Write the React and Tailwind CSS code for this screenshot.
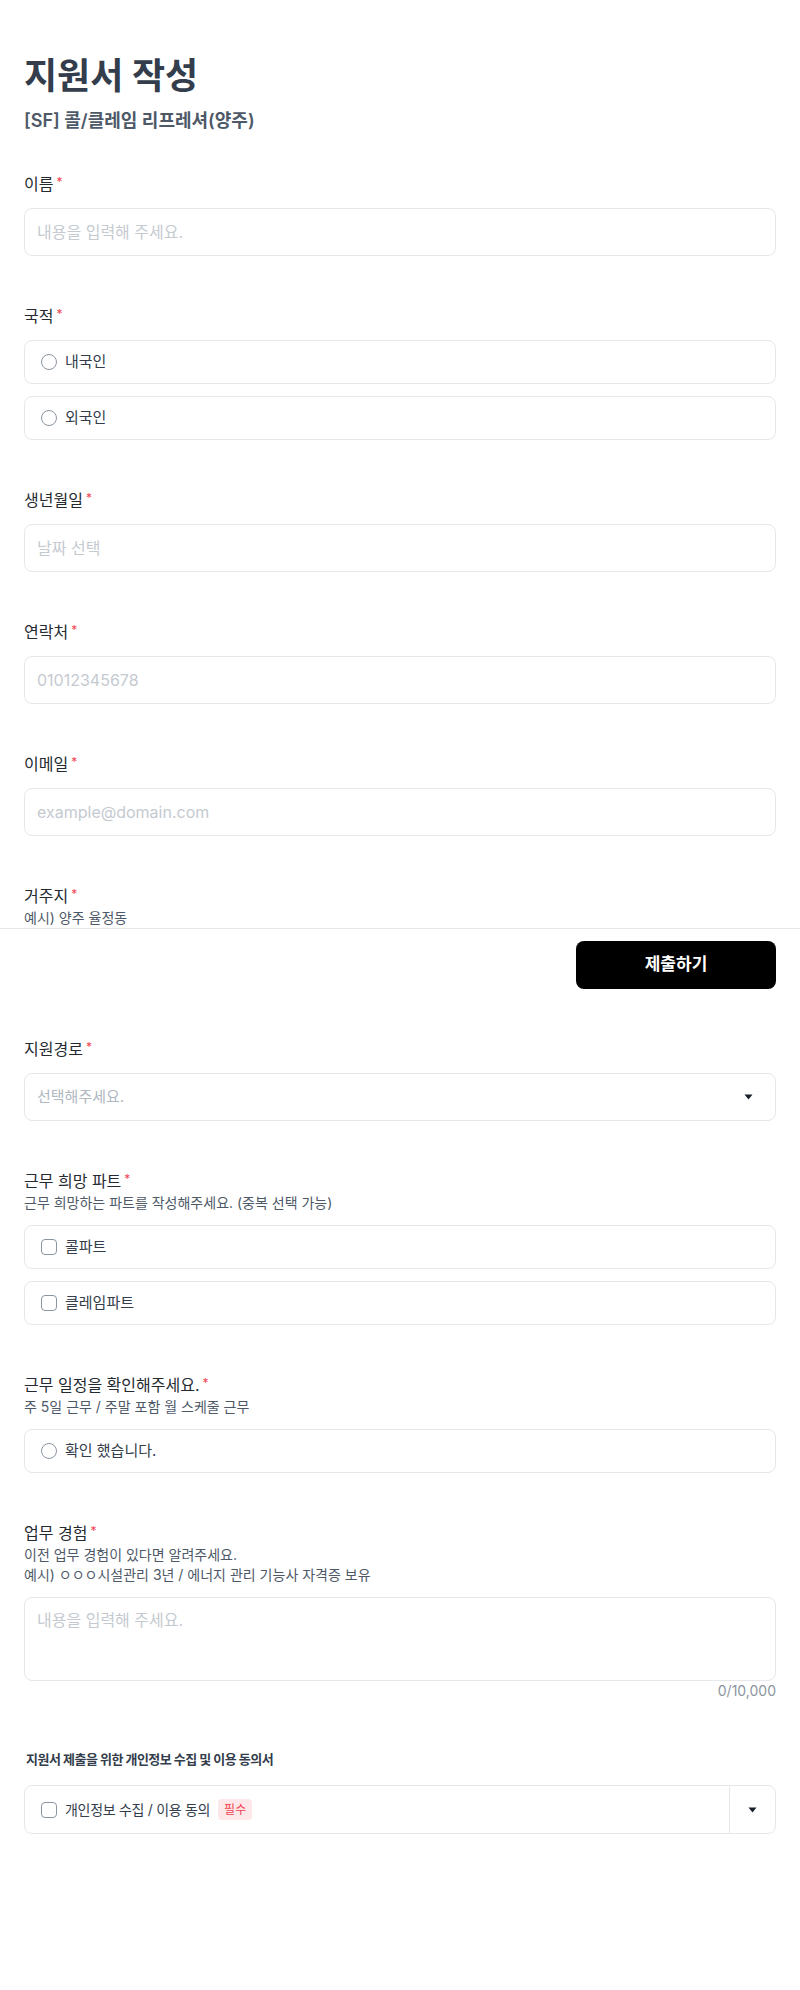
import React, { useState } from "react";

const font = "font-['Inter','Noto_Sans_CJK_KR',sans-serif]";

function Label({ children, desc }) {
  return (
    <div className="mb-3">
      <div className="flex items-start text-[16px] leading-6 font-normal text-[#252a31]">
        <span>{children}</span>
        <span className="ml-[3px] mt-[2px] text-[12px] leading-4 text-[#f04452]">*</span>
      </div>
      {desc && desc.map((d, i) => (
        <p key={i} className="text-[14px] leading-5 text-[#4e5968]">{d}</p>
      ))}
    </div>
  );
}

function TextInput({ placeholder }) {
  return (
    <input
      type="text"
      placeholder={placeholder}
      className="w-full h-12 rounded-lg border border-[#e5e8eb] px-3 text-[16px] text-[#333d4b] placeholder:text-[#c5cad1] focus:outline-none"
    />
  );
}

function Caret() {
  return (
    <svg width="9" height="6" viewBox="0 0 9 6" className="text-[#191f28]">
      <path d="M0.5 0.5h8L4.5 5.5z" fill="currentColor" />
    </svg>
  );
}

function OptionRow({ type, label, checked, onClick }) {
  return (
    <button
      type="button"
      onClick={onClick}
      className="w-full h-11 flex items-center gap-2 rounded-lg border border-[#e5e8eb] px-4 text-left"
    >
      {type === "radio" ? (
        <span className={`w-4 h-4 rounded-full border-[1.5px] ${checked ? "border-[5px] border-[#191f28]" : "border-[#8b95a1]"}`}></span>
      ) : (
        <span className={`w-4 h-4 rounded-[4px] border-[1.5px] ${checked ? "bg-[#191f28] border-[#191f28]" : "border-[#8b95a1]"}`}></span>
      )}
      <span className="text-[15px] leading-6 text-[#333d4b]">{label}</span>
    </button>
  );
}

export default function App() {
  const [nation, setNation] = useState("");
  const [parts, setParts] = useState({ call: false, claim: false });
  const [confirm, setConfirm] = useState(false);
  const [agree, setAgree] = useState(false);
  const [exp, setExp] = useState("");

  return (
    <div className={`min-h-screen bg-white ${font}`}>
      <div className="px-6 pt-[52px]">
        <h1 className="text-[36px] leading-[48px] font-bold text-[#333d4b]">지원서 작성</h1>
        <p className="mt-2 text-[18px] leading-[26px] font-semibold text-[#4e5968]">[SF] 콜/클레임 리프레셔(양주)</p>

        <div className="mt-[38px] flex flex-col gap-12">
          {/* 이름 */}
          <div>
            <Label>이름</Label>
            <TextInput placeholder="내용을 입력해 주세요." />
          </div>

          {/* 국적 */}
          <div>
            <Label>국적</Label>
            <div className="flex flex-col gap-3">
              <OptionRow type="radio" label="내국인" checked={nation === "in"} onClick={() => setNation("in")} />
              <OptionRow type="radio" label="외국인" checked={nation === "out"} onClick={() => setNation("out")} />
            </div>
          </div>

          {/* 생년월일 */}
          <div>
            <Label>생년월일</Label>
            <TextInput placeholder="날짜 선택" />
          </div>

          {/* 연락처 */}
          <div>
            <Label>연락처</Label>
            <TextInput placeholder="01012345678" />
          </div>

          {/* 이메일 */}
          <div>
            <Label>이메일</Label>
            <TextInput placeholder="example@domain.com" />
          </div>

          {/* 거주지 */}
          <div>
            <div className="flex items-start text-[16px] leading-6 font-normal text-[#252a31]">
              <span>거주지</span>
              <span className="ml-[3px] mt-[2px] text-[12px] leading-4 text-[#f04452]">*</span>
            </div>
            <p className="text-[14px] leading-5 text-[#4e5968]">예시) 양주 율정동</p>
          </div>
        </div>
      </div>

      {/* 하단 제출 바 */}
      <div className="border-t border-[#e5e8eb] bg-white px-6 pt-3 flex justify-end">
        <button type="button" className="w-[200px] h-12 rounded-lg bg-black text-white text-[17px] font-bold">
          제출하기
        </button>
      </div>

      <div className="px-6 pt-12 pb-[154px] flex flex-col gap-12">
        {/* 지원경로 */}
        <div>
          <Label>지원경로</Label>
          <div className="w-full h-12 rounded-lg border border-[#e5e8eb] pl-3 pr-[22px] flex items-center justify-between">
            <span className="text-[15px] text-[#b0b8c1]">선택해주세요.</span>
            <Caret />
          </div>
        </div>

        {/* 근무 희망 파트 */}
        <div>
          <Label desc={["근무 희망하는 파트를 작성해주세요. (중복 선택 가능)"]}>근무 희망 파트</Label>
          <div className="flex flex-col gap-3">
            <OptionRow type="checkbox" label="콜파트" checked={parts.call} onClick={() => setParts({ ...parts, call: !parts.call })} />
            <OptionRow type="checkbox" label="클레임파트" checked={parts.claim} onClick={() => setParts({ ...parts, claim: !parts.claim })} />
          </div>
        </div>

        {/* 근무 일정 */}
        <div>
          <Label desc={["주 5일 근무 / 주말 포함 월 스케줄 근무"]}>근무 일정을 확인해주세요.</Label>
          <OptionRow type="radio" label="확인 했습니다." checked={confirm} onClick={() => setConfirm(!confirm)} />
        </div>

        {/* 업무 경험 */}
        <div>
          <Label desc={["이전 업무 경험이 있다면 알려주세요.", "예시) ㅇㅇㅇ시설관리 3년 / 에너지 관리 기능사 자격증 보유"]}>업무 경험</Label>
          <textarea
            value={exp}
            onChange={(e) => setExp(e.target.value)}
            placeholder="내용을 입력해 주세요."
            className="block w-full h-[84px] resize-none rounded-lg border border-[#e5e8eb] px-3 py-2.5 text-[16px] leading-6 text-[#333d4b] placeholder:text-[#c5cad1] focus:outline-none"
          />
          <p className="text-right text-[14px] leading-5 text-[#8b95a1]">{exp.length.toLocaleString()}/10,000</p>
        </div>

        {/* 개인정보 동의 */}
        <div className="-mt-[2px]">
          <h2 className="px-0.5 text-[13px] leading-6 tracking-[-0.5px] font-bold text-[#333d4b]">지원서 제출을 위한 개인정보 수집 및 이용 동의서</h2>
          <div className="mt-[14px] h-[49px] flex rounded-lg border border-[#e5e8eb]">
            <button type="button" onClick={() => setAgree(!agree)} className="flex-1 flex items-center gap-2 px-4 text-left">
              <span className={`w-4 h-4 rounded-[4px] border-[1.5px] ${agree ? "bg-[#191f28] border-[#191f28]" : "border-[#8b95a1]"}`}></span>
              <span className="text-[14px] leading-6 tracking-[-0.3px] text-[#333d4b]">개인정보 수집 / 이용 동의</span>
              <span className="px-1.5 h-[21px] flex items-center rounded bg-[#fde8e9] text-[12px] text-[#f04452]">필수</span>
            </button>
            <div className="w-[46px] border-l border-[#e5e8eb] flex items-center justify-center">
              <Caret />
            </div>
          </div>
        </div>
      </div>
    </div>
  );
}
